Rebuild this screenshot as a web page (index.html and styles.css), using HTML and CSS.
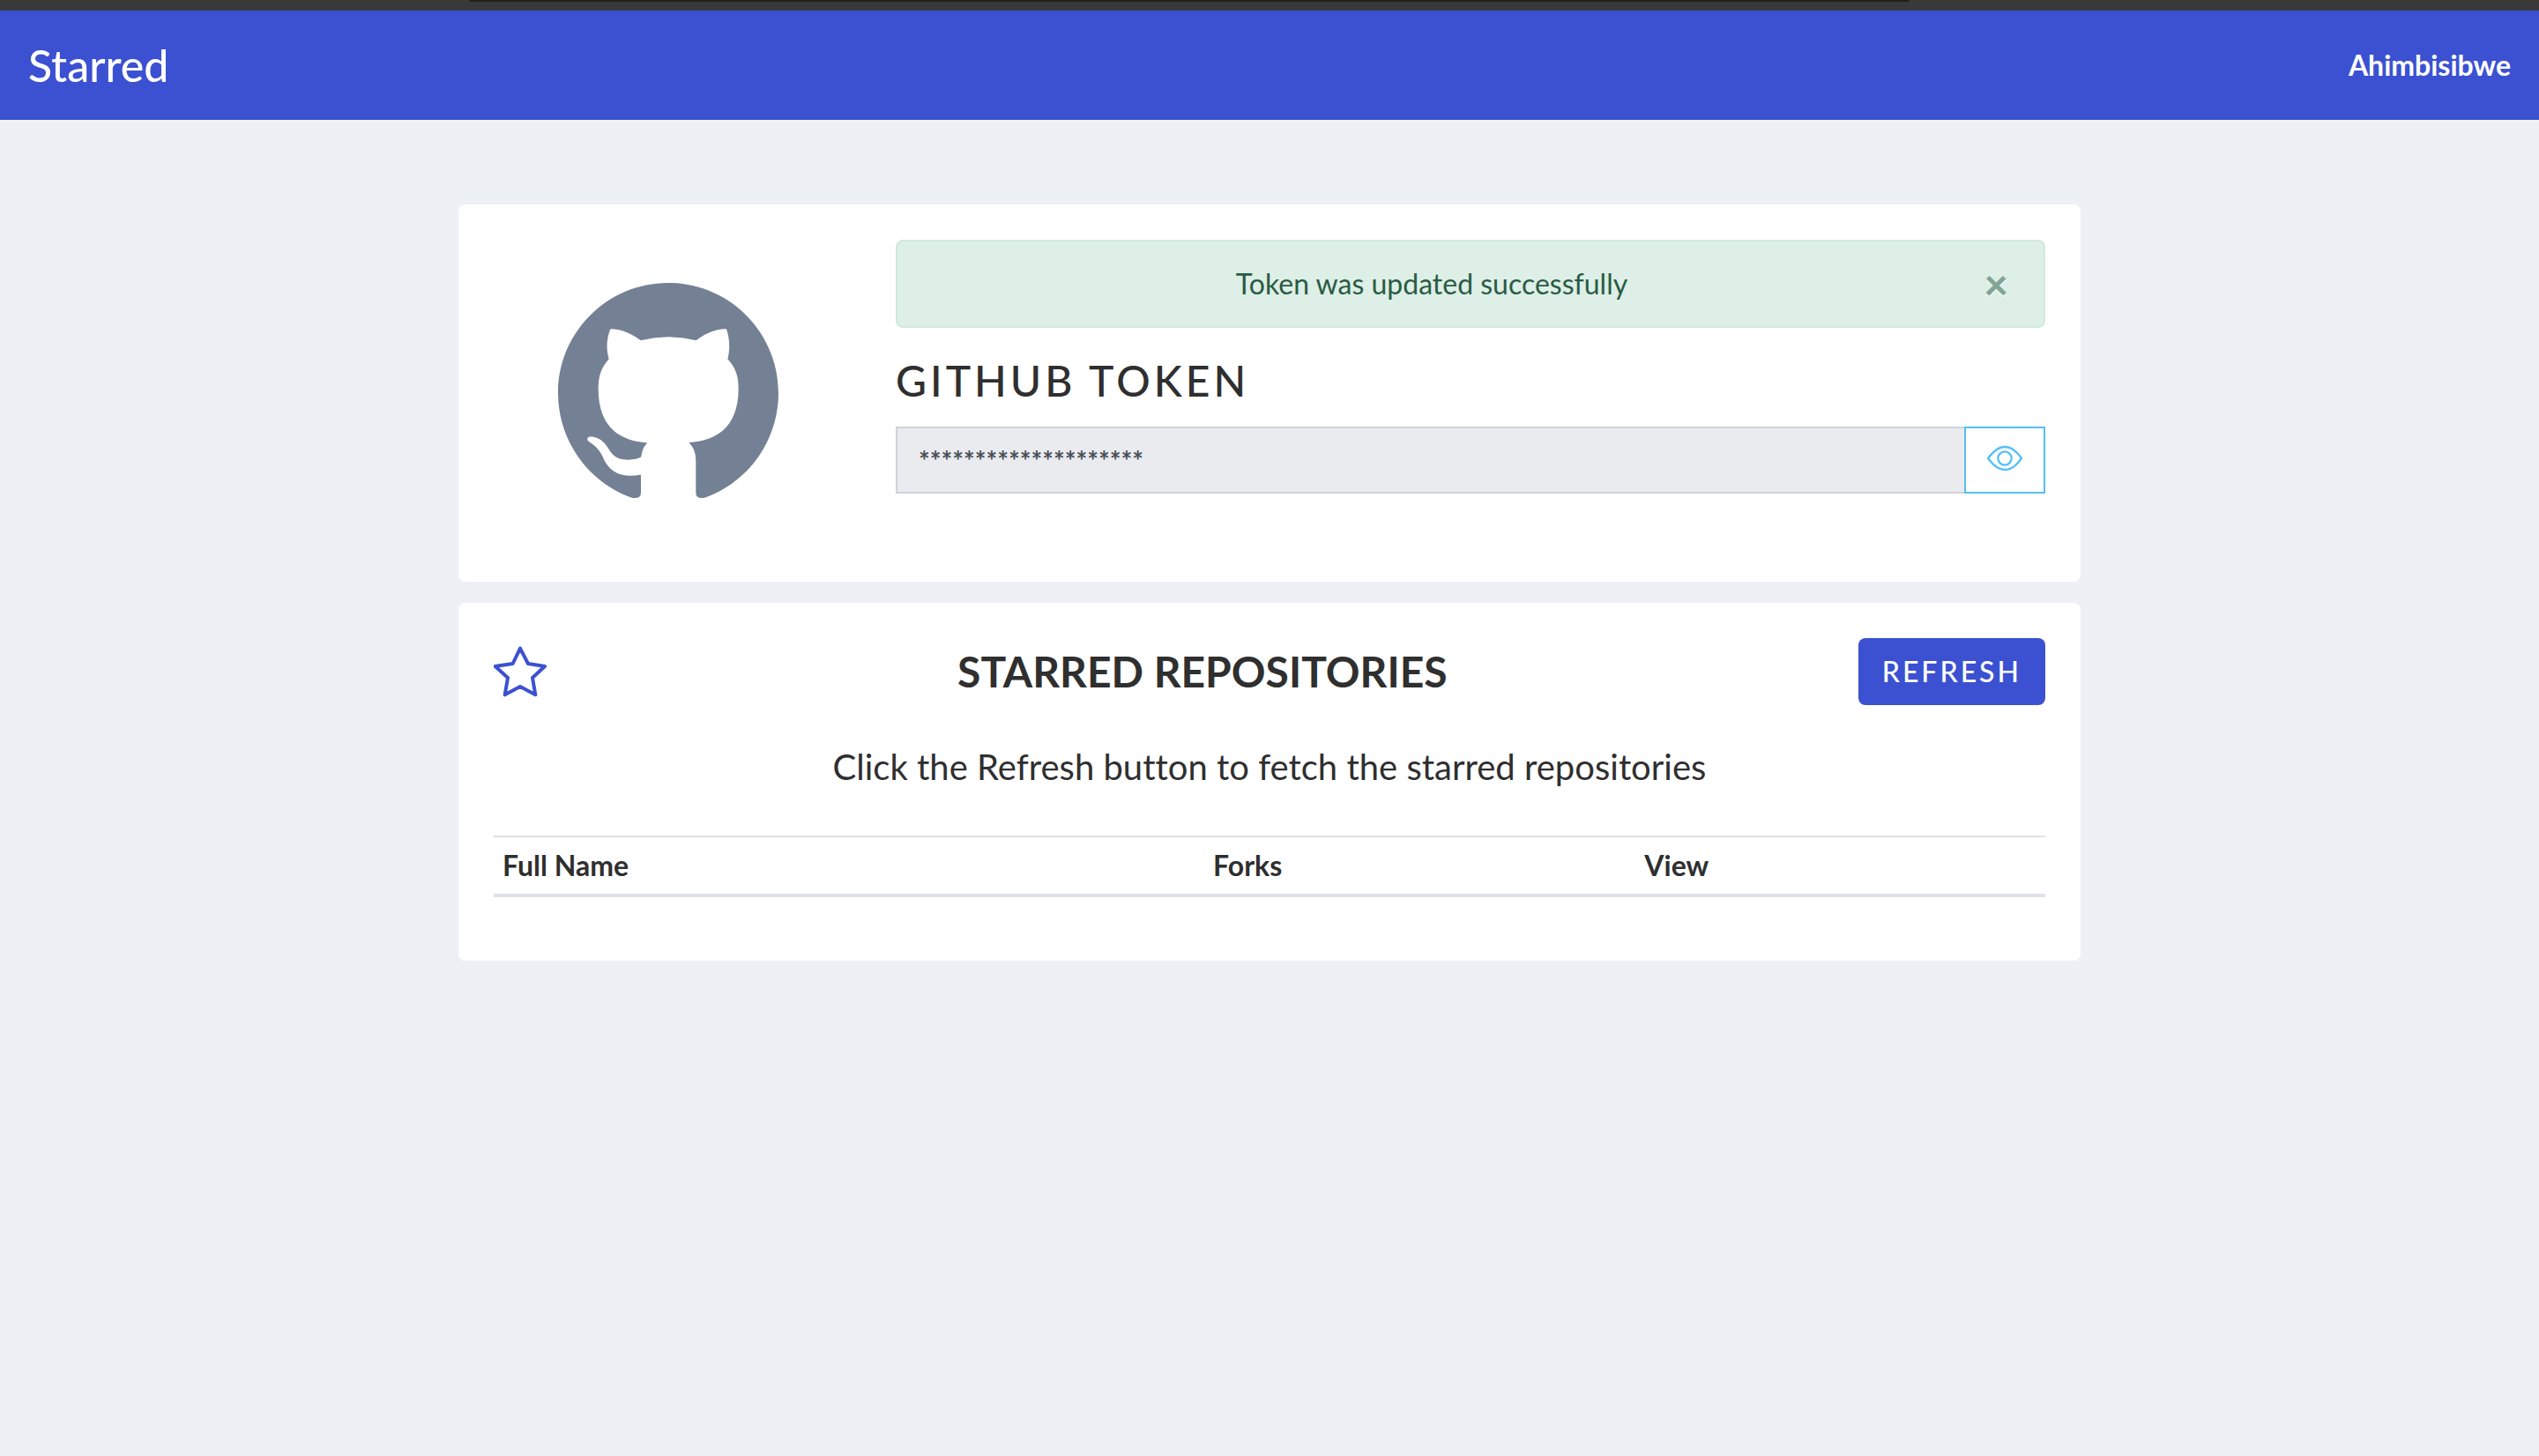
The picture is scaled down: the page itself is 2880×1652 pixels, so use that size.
FILE: index.html
```html
<!DOCTYPE html>
<html lang="en">
<head>
<meta charset="utf-8">
<meta name="viewport" content="width=device-width, initial-scale=1">
<title>Starred</title>
<link rel="stylesheet" href="styles.css">
</head>
<body>
<div class="chrome"><div class="chrome-field"></div></div>
<nav class="navbar">
  <a class="brand" href="#">Starred</a>
  <a class="user" href="#">Ahimbisibwe</a>
</nav>
<main class="container">
  <section class="card token">
    <svg class="logo" viewBox="399 331 750 750" role="img" aria-label="GitHub">
      <path d="M774 331C567 331 399 499 399 706C399 868 502 1010 650 1062Q681 1068 681 1045V987Q681 983 677 984C665 986 655 987 640 987C600 987 571 965 555 932C547 910 535 892 505 872C498 867 498 861 500 858C505 852 530 853 550 870C578 892 575 933 637 933C655 933 680 927 682 922C685 900 692 885 702 877Q703 875 700 875C620 868 536 832 536 690C536 645 548 617 572 590C563 560 563 525 576 490Q577 488 580 488C600 487 640 497 678 525Q681 527 684 526Q774 504 865 526Q868 527 871 525C908 497 948 486 969 488Q972 488 973 491C984 525 984 560 976 590C1001 617 1013 645 1013 690C1013 832 927 868 847 874Q844 875 846 877C861 892 868 910 868 940V1045Q868 1068 898 1062C1046 1010 1149 868 1149 706C1149 499 981 331 774 331Z"/>
    </svg>
    <div class="token-body">
      <div class="alert" role="alert">
        <span class="alert-text">Token was updated successfully</span>
        <button class="close" type="button" aria-label="Close">×</button>
      </div>
      <label class="token-label" for="token">GITHUB TOKEN</label>
      <div class="input-group">
        <input class="input" id="token" type="text" value="********************" readonly>
        <button class="reveal" type="button" aria-label="Show token">
          <svg class="eye" viewBox="1062 876 120 120" aria-hidden="true">
            <path d="M1065 930C1085 903 1104 891 1122 891S1160 903 1179 930C1160 957 1140 969 1122 969S1085 957 1065 930Z"/>
            <circle cx="1122" cy="930" r="23"/>
          </svg>
        </button>
      </div>
    </div>
  </section>
  <section class="card">
    <header class="repos-head">
      <svg class="star" viewBox="180 216 180 180" aria-hidden="true">
        <path d="M270 227L297 279L354 288L312 327L322 385L270 357L218 385L228 327L185 288L245 279Z"/>
      </svg>
      <h2 class="repos-title">STARRED REPOSITORIES</h2>
      <button class="refresh" type="button">REFRESH</button>
    </header>
    <p class="hint">Click the Refresh button to fetch the starred repositories</p>
    <table class="table">
      <thead>
        <tr><th class="col-name" scope="col">Full Name</th><th class="col-forks" scope="col">Forks</th><th scope="col">View</th></tr>
      </thead>
      <tbody></tbody>
    </table>
  </section>
</main>
</body>
</html>
```
FILE: styles.css
```css
* {
  box-sizing: border-box;
}

body {
  margin: 0;
  background: #edf1f6;
  color: #2f2f2f;
  font: 400 32px/48px Lato, "Liberation Sans", sans-serif;
  font-variant-ligatures: none;
}

button,
input {
  font: inherit;
}

.chrome {
  height: 12px;
  background: #393939;
}

.chrome-field {
  width: 1632px;
  max-width: 60%;
  height: 2px;
  margin-left: 533px;
  background: #202020;
}

.navbar {
  display: flex;
  align-items: center;
  justify-content: space-between;
  height: 124px;
  padding: 0 32px;
  background: #3b51d1;
}

.navbar a {
  color: #fff;
  text-decoration: none;
}

.brand {
  font-size: 50px;
  font-weight: 500;
  line-height: 56px;
}

.user {
  font-weight: 700;
}

.container {
  display: flex;
  flex-direction: column;
  gap: 24px;
  max-width: 1840px;
  margin: 96px auto 0;
}

.card {
  padding: 40px;
  border-radius: 8px;
  background: #fff;
}

.token {
  display: grid;
  grid-template-columns: calc(25% - 44px) 1fr;
  gap: 60px;
  align-items: center;
}

.logo {
  width: 250px;
  height: 250px;
  margin: 0 auto;
  fill: #748195;
}

.token-body {
  padding-bottom: 60px;
}

.alert {
  display: flex;
  align-items: center;
  height: 100px;
  margin-bottom: 32px;
  border: 2px solid #cfeadd;
  border-radius: 8px;
  background: #ddefe6;
  color: #2a5b44;
}

.alert-text {
  flex: 1;
  padding-left: 40px;
  text-align: center;
}

.close {
  width: 128px;
  padding: 0 40px 0 0;
  border: 0;
  background: none;
  color: #2a5b44;
  font-size: 48px;
  font-weight: 900;
  line-height: 48px;
  text-align: right;
  text-shadow: 0 2px 0 #fff;
  opacity: 0.5;
}

.token-label {
  display: block;
  margin-bottom: 24px;
  font-size: 48px;
  font-weight: 500;
  line-height: 56px;
  letter-spacing: 4px;
}

.input-group {
  display: flex;
  height: 76px;
}

.input {
  flex: 1;
  min-width: 0;
  padding: 0 24px;
  border: 2px solid #cdd2da;
  border-right: 0;
  border-radius: 0;
  background: #eaebef;
  color: #495057;
  font-size: 30px;
  font-weight: 700;
}

.reveal {
  display: flex;
  align-items: center;
  justify-content: center;
  width: 92px;
  padding: 0;
  border: 2px solid #55bff7;
  background: #fff;
}

.eye {
  width: 40px;
  height: 40px;
  fill: none;
  stroke: #55bff7;
  stroke-width: 7;
  stroke-linejoin: round;
}

.repos-head {
  display: flex;
  align-items: center;
  justify-content: space-between;
}

.star {
  width: 60px;
  height: 60px;
  fill: none;
  stroke: #3b51d1;
  stroke-width: 12;
  stroke-linejoin: round;
}

.repos-title {
  margin: 0;
  font-size: 48px;
  font-weight: 700;
  line-height: 56px;
}

.refresh {
  height: 76px;
  padding: 0 27px;
  border: 0;
  border-radius: 8px;
  background: #3b51d1;
  color: #fff;
  font-weight: 500;
  letter-spacing: 3px;
}

.hint {
  margin: 40px 0 48px;
  font-size: 40px;
  line-height: 60px;
  text-align: center;
}

.table {
  width: 100%;
  margin-bottom: 32px;
  border-spacing: 0;
  table-layout: fixed;
}

.table th {
  height: 70px;
  padding: 0 10px;
  border-top: 2px solid #dee2e6;
  border-bottom: 4px solid #dee2e6;
  font-weight: 700;
  text-align: left;
}

.table .col-name {
  width: 45.8%;
}

.table .col-forks {
  width: 27.8%;
}
```
